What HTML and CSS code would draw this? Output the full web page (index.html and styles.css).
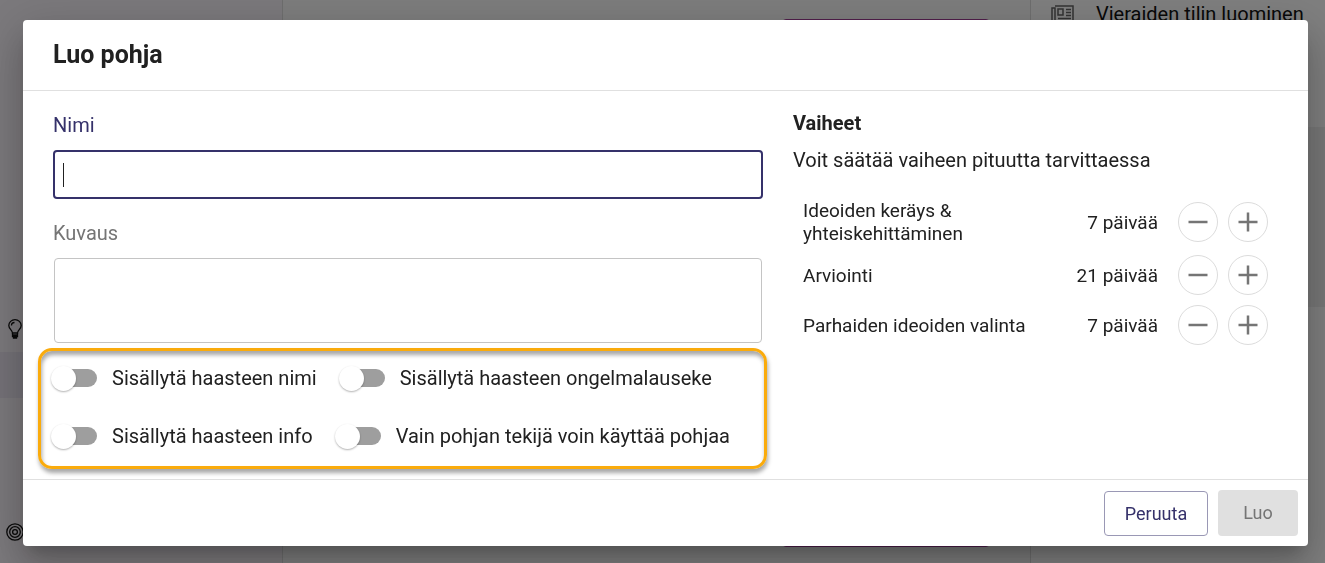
FILE: index.html
```html
<!DOCTYPE html>
<html lang="fi">
<head>
    <meta charset="UTF-8">
    <meta name="viewport" content="width=device-width, initial-scale=1.0">
    <title>Luo pohja</title>
    <link rel="stylesheet" href="styles.css">
</head>
<body>
    <div class="page">
        <nav class="sidebar">
            <a href="#" class="nav-item" aria-label="Ideat">
                <svg width="14" height="20" viewBox="0 0 14 20" fill="none" stroke="#111" stroke-width="1.3">
                    <path d="M4.5 14c0-3-3.7-4-3.7-7.5a6.2 5.8 0 0 1 12.4 0c0 3.5-3.7 4.5-3.7 7.5z"/>
                    <path d="M4.5 14v3.5h5V14M4.5 16h5M5.5 17.5v1.5h3v-1.5M3.5 6.5c0-2 1.3-3 3-3"/>
                </svg>
            </a>
            <a href="#" class="nav-item active" aria-label="Haasteet"></a>
            <a href="#" class="nav-item nav-bottom" aria-label="Tavoitteet">
                <svg width="18" height="18" viewBox="0 0 18 18" fill="none" stroke="#111" stroke-width="1.3">
                    <circle cx="9" cy="9" r="8.2"/>
                    <circle cx="9" cy="9" r="5.3"/>
                    <circle cx="9" cy="9" r="2.4"/>
                </svg>
            </a>
        </nav>
        <main class="content">
            <div class="content-card"></div>
        </main>
        <aside class="news">
            <a href="#" class="news-item">
                <svg width="23" height="18" viewBox="0 0 23 18" fill="none" stroke="#666" stroke-width="1.5">
                    <path d="M4 1h18v16H3a2 2 0 0 1-2-2V3h3v12"/>
                    <path d="M7 4h5v6H7zM15 4.5h5M15 7.5h5M15 10.5h5M7 13.5h13"/>
                </svg>
                <span>Vieraiden tilin luominen</span>
            </a>
            <div class="news-block"></div>
        </aside>
    </div>

    <div class="backdrop">
        <form class="dialog" role="dialog" aria-labelledby="dialogTitle">
            <header class="dialog-header">
                <h1 class="dialog-title" id="dialogTitle">Luo pohja</h1>
            </header>

            <div class="dialog-body">
                <div class="fields">
                    <label class="label focused" for="nameInput">Nimi</label>
                    <input type="text" class="text-input" id="nameInput">
                    <label class="label" for="descInput">Kuvaus</label>
                    <textarea class="text-area" id="descInput"></textarea>

                    <div class="switches">
                        <div class="switch-row">
                            <label class="switch"><input type="checkbox" class="toggle">Sisällytä haasteen nimi</label>
                            <label class="switch"><input type="checkbox" class="toggle">Sisällytä haasteen ongelmalauseke</label>
                        </div>
                        <div class="switch-row">
                            <label class="switch"><input type="checkbox" class="toggle">Sisällytä haasteen info</label>
                            <label class="switch"><input type="checkbox" class="toggle">Vain pohjan tekijä voin käyttää pohjaa</label>
                        </div>
                    </div>
                </div>

                <section class="phases">
                    <h2 class="phases-title">Vaiheet</h2>
                    <p class="phases-text">Voit säätää vaiheen pituutta tarvittaessa</p>
                    <div class="phase-list">
                        <div class="phase">
                            <span class="phase-name">Ideoiden keräys &amp; yhteiskehittäminen</span>
                            <span class="phase-days">7 päivää</span>
                            <button type="button" class="round" aria-label="Vähennä"><svg width="20" height="20" viewBox="0 0 20 20"><path d="M0.500 10h19"/></svg></button>
                            <button type="button" class="round" aria-label="Lisää"><svg width="20" height="20" viewBox="0 0 20 20"><path d="M0.500 10h19M10 0.500v19"/></svg></button>
                        </div>
                        <div class="phase">
                            <span class="phase-name">Arviointi</span>
                            <span class="phase-days">21 päivää</span>
                            <button type="button" class="round" aria-label="Vähennä"><svg width="20" height="20" viewBox="0 0 20 20"><path d="M0.500 10h19"/></svg></button>
                            <button type="button" class="round" aria-label="Lisää"><svg width="20" height="20" viewBox="0 0 20 20"><path d="M0.500 10h19M10 0.500v19"/></svg></button>
                        </div>
                        <div class="phase">
                            <span class="phase-name">Parhaiden ideoiden valinta</span>
                            <span class="phase-days">7 päivää</span>
                            <button type="button" class="round" aria-label="Vähennä"><svg width="20" height="20" viewBox="0 0 20 20"><path d="M0.500 10h19"/></svg></button>
                            <button type="button" class="round" aria-label="Lisää"><svg width="20" height="20" viewBox="0 0 20 20"><path d="M0.500 10h19M10 0.500v19"/></svg></button>
                        </div>
                    </div>
                </section>
            </div>

            <footer class="dialog-footer">
                <button type="button" class="button outlined">Peruuta</button>
                <button type="submit" class="button" disabled>Luo</button>
            </footer>
        </form>
    </div>
</body>
</html>
```

FILE: styles.css
```css
* {
    box-sizing: border-box;
}

body {
    margin: 0;
    font-family: Roboto, sans-serif;
    font-size: 20px;
    line-height: 24px;
    color: #212121;
}

/* page behind the dialog */
.page {
    display: grid;
    grid-template-columns: 283px 1fr 295px;
    height: 100vh;
    overflow: hidden;
    background: #fafafa;
}

.sidebar {
    display: flex;
    flex-direction: column;
    padding: 306px 0 8px;
    background: #f7f2f8;
    border-right: 1px solid #ddd;
}

.nav-item {
    display: flex;
    align-items: center;
    height: 46px;
    padding-left: 8px;
}

.nav-item.active {
    background: #e9e4f0;
}

.nav-bottom {
    padding-left: 6px;
    margin-top: auto;
}

.content {
    padding: 19px 40px 16px;
}

.content-card {
    width: 208px;
    height: 100%;
    margin-left: auto;
    border: 1px solid #a03c96;
    border-radius: 4px;
}

.news {
    padding-top: 1px;
    border-left: 1px solid #ddd;
    background: #fff;
}

.news-item {
    display: flex;
    align-items: center;
    gap: 22px;
    height: 26px;
    padding-left: 20px;
    color: #111;
    text-decoration: none;
    white-space: nowrap;
}

.news-block {
    height: 180px;
    margin-top: 100px;
    background: #f0f0f0;
}

/* dialog */
.backdrop {
    position: fixed;
    inset: 0;
    display: flex;
    padding: 20px 17px 17px 23px;
    background: rgba(0, 0, 0, 0.5);
}

.dialog {
    display: flex;
    flex-direction: column;
    flex: 1;
    background: #fff;
    border-radius: 4px;
    box-shadow: 0 11px 15px -7px rgba(0, 0, 0, 0.2), 0 24px 38px 3px rgba(0, 0, 0, 0.14), 0 9px 46px 8px rgba(0, 0, 0, 0.12);
}

.dialog-header {
    padding: 20px 30px;
    border-bottom: 1px solid #e0e0e0;
}

.dialog-title {
    margin: 0;
    font-size: 25px;
    font-weight: 700;
    line-height: 30px;
}

.dialog-body {
    display: grid;
    grid-template-columns: 710fr 485fr;
    gap: 30px;
    flex: 1;
    padding: 0 30px;
}

.fields {
    display: flex;
    flex-direction: column;
}

.label {
    margin: 22px 0 13px;
    color: #757575;
}

.label.focused {
    color: #35316a;
}

.text-input {
    height: 49px;
    padding: 0 8px;
    border: 2px solid #35316a;
    border-radius: 4px;
    outline: none;
    font: inherit;
    /* text cursor of the focused field */
    background: linear-gradient(#212121, #212121) 8px center / 1px 24px no-repeat #fff;
}

.text-area {
    height: 85px;
    margin: 0 1px;
    padding: 8px;
    border: 1px solid #c4c4c4;
    border-radius: 4px;
    font: inherit;
    resize: none;
}

.switches {
    display: flex;
    flex-direction: column;
    gap: 4px;
    margin: 5px -4px 10px -15px;
    padding: 0 0 3px 10px;
    border: 3px solid #faab0c;
    border-radius: 14px;
    box-shadow: 1px 4px 4px rgba(0, 0, 0, 0.35), inset 1px 4px 4px rgba(0, 0, 0, 0.35);
}

.switch-row {
    display: flex;
    align-items: center;
    gap: 22px;
    height: 54px;
}

.switch {
    display: flex;
    align-items: center;
    gap: 15px;
    white-space: nowrap;
}

.toggle {
    display: flex;
    align-items: center;
    appearance: none;
    width: 46px;
    height: 18px;
    margin: 0;
    background: linear-gradient(#9e9e9e, #9e9e9e) right center / 30px 18px no-repeat;
    border-radius: 9px;
    cursor: pointer;
}

.toggle::before {
    content: "";
    width: 25px;
    height: 25px;
    flex: none;
    border-radius: 50%;
    background: #fff;
    box-shadow: 0 1px 2px rgba(0, 0, 0, 0.3);
}

.phases-title {
    margin: 20px 0 13px;
    font-size: 20px;
    font-weight: 700;
    line-height: 24px;
}

.phases-text {
    margin: 0;
}

.phase-list {
    display: flex;
    flex-direction: column;
    gap: 10px;
    padding: 27px 10px 0;
}

.phase {
    display: flex;
    align-items: center;
    gap: 10px;
    font-size: 19px;
    line-height: 23px;
}

.phase-name {
    width: 230px;
}

.phase-days {
    margin-left: auto;
    margin-right: 10px;
}

.round {
    display: flex;
    align-items: center;
    justify-content: center;
    width: 40px;
    height: 40px;
    padding: 0;
    border: 1px solid #dcdcdc;
    border-radius: 50%;
    background: #fff;
}

.round path {
    stroke: #757575;
    stroke-width: 2.5;
}

.dialog-footer {
    display: flex;
    align-items: flex-end;
    justify-content: flex-end;
    gap: 10px;
    padding: 10px;
    border-top: 1px solid #e0e0e0;
}

.button {
    min-width: 80px;
    height: 46px;
    padding: 0 18px;
    border: none;
    border-radius: 4px;
    font: inherit;
    font-size: 18px;
}

.button.outlined {
    min-width: 104px;
    height: 45px;
    border: 1px solid #9a98b5;
    background: #fff;
    color: #35316a;
}

.button:disabled {
    background: #e0e0e0;
    color: #757575;
}
```
